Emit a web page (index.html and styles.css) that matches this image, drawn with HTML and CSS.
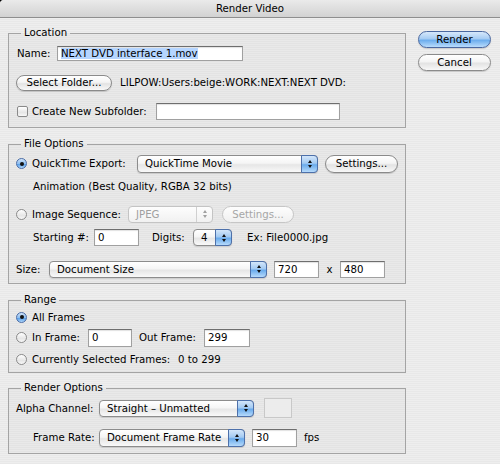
FILE: index.html
```html
<!DOCTYPE html>
<html lang="en">
<head>
    <meta charset="UTF-8">
    <meta name="viewport" content="width=device-width, initial-scale=1.0">
    <title>Render Video</title>
    <link rel="stylesheet" href="styles.css">
</head>
<body>
    <div class="window">
        <div class="titlebar">Render Video</div>
        <div class="dialog">
            <div class="main">
                <fieldset class="group group-location">
                    <legend>Location</legend>
                    <div class="row loc-row">
                        <span class="label label-name">Name:</span>
                        <div class="field field-name"><span class="selected">NEXT DVD interface 1.mov</span></div>
                    </div>
                    <div class="row loc-row">
                        <button class="btn btn-folder">Select Folder...</button>
                        <span class="path">LILPOW:Users:beige:WORK:NEXT:NEXT DVD:</span>
                    </div>
                    <div class="row loc-row">
                        <span class="checkbox"></span>
                        <span class="label label-subfolder">Create New Subfolder:</span>
                        <div class="field field-subfolder"></div>
                    </div>
                </fieldset>

                <fieldset class="group group-file">
                    <legend>File Options</legend>
                    <div class="row r-export">
                        <span class="radio on"></span>
                        <span class="label label-export">QuickTime Export:</span>
                        <div class="popup popup-export">
                            <span class="popup-text">QuickTime Movie</span>
                            <span class="popup-arrows"></span>
                        </div>
                        <button class="btn btn-settings">Settings...</button>
                    </div>
                    <div class="row r-note">Animation (Best Quality, RGBA 32 bits)</div>
                    <div class="row r-seq">
                        <span class="radio"></span>
                        <span class="label label-seq">Image Sequence:</span>
                        <div class="popup popup-seq disabled">
                            <span class="popup-text">JPEG</span>
                            <span class="popup-arrows"></span>
                        </div>
                        <button class="btn btn-settings btn-disabled">Settings...</button>
                    </div>
                    <div class="row r-start">
                        <span class="label label-start">Starting #:</span>
                        <div class="field field-small">0</div>
                        <span class="label label-digits">Digits:</span>
                        <div class="popup popup-digits">
                            <span class="popup-text">4</span>
                            <span class="popup-arrows"></span>
                        </div>
                        <span class="example">Ex: File0000.jpg</span>
                    </div>
                    <div class="row r-size">
                        <span class="label label-size">Size:</span>
                        <div class="popup popup-size">
                            <span class="popup-text">Document Size</span>
                            <span class="popup-arrows"></span>
                        </div>
                        <div class="field field-small field-width">720</div>
                        <span class="times">x</span>
                        <div class="field field-small">480</div>
                    </div>
                </fieldset>

                <fieldset class="group group-range">
                    <legend>Range</legend>
                    <div class="row r-all">
                        <span class="radio on"></span>
                        <span>All Frames</span>
                    </div>
                    <div class="row r-in">
                        <span class="radio"></span>
                        <span class="label label-in">In Frame:</span>
                        <div class="field field-frame">0</div>
                        <span class="label label-out">Out Frame:</span>
                        <div class="field field-frame field-out">299</div>
                    </div>
                    <div class="row r-current">
                        <span class="radio"></span>
                        <span class="label label-current">Currently Selected Frames:</span>
                        <span>0 to 299</span>
                    </div>
                </fieldset>

                <fieldset class="group group-render">
                    <legend>Render Options</legend>
                    <div class="row r-alpha">
                        <span class="label label-alpha">Alpha Channel:</span>
                        <div class="popup popup-alpha">
                            <span class="popup-text">Straight – Unmatted</span>
                            <span class="popup-arrows"></span>
                        </div>
                        <span class="swatch"></span>
                    </div>
                    <div class="row r-rate">
                        <span class="label label-rate">Frame Rate:</span>
                        <div class="popup popup-rate">
                            <span class="popup-text">Document Frame Rate</span>
                            <span class="popup-arrows"></span>
                        </div>
                        <div class="field field-rate">30</div>
                        <span class="fps">fps</span>
                    </div>
                </fieldset>
            </div>

            <div class="side">
                <button class="btn btn-default">Render</button>
                <button class="btn btn-cancel">Cancel</button>
            </div>
        </div>
    </div>
</body>
</html>
```

FILE: styles.css
```css
* {
    box-sizing: border-box;
}

body {
    margin: 0;
    background: #000;
    font-family: "DejaVu Sans", "Lucida Grande", sans-serif;
    font-size: 10.2px;
    color: #000;
}

.window {
    width: 500px;
    height: 464px;
    border-top-left-radius: 4px;
    overflow: hidden;
    background: repeating-linear-gradient(to bottom, #eeeeee 0, #eeeeee 1px, #e8e8e8 1px, #e8e8e8 2px);
}

.titlebar {
    height: 18px;
    line-height: 17px;
    text-align: center;
    border-bottom: 1px solid #8e8e8e;
    background: linear-gradient(#eaeaea, #d2d2d2);
}

.dialog {
    display: flex;
    padding-left: 8px;
}

.main {
    width: 398px;
}

.side {
    display: flex;
    flex-direction: column;
    margin-left: 12px;
    padding-top: 13px;
}

/* Group boxes */
.group {
    margin: 10px 0 0;
    padding: 0 7px;
    min-width: 0;
    border: 1px solid #a4a4a4;
    background: rgba(0, 0, 0, 0.02);
}

.group legend {
    margin-left: 5px;
    padding: 0 3px;
    line-height: 12px;
}

.group-location {
    margin-top: 9px;
    padding-bottom: 1px;
}

.group-file {
    padding-bottom: 2px;
}

.group-render {
    margin-top: 9px;
}

.row {
    display: flex;
    align-items: center;
    white-space: nowrap;
}

.label {
    flex: none;
}

/* Location */
.loc-row { height: 29px; }
.label-name { margin-left: 1px; width: 40px; }
.label-subfolder { width: 124px; }
.path { margin-left: 8px; }

/* File options */
.r-export { height: 27px; }
.r-note { height: 18px; padding-left: 17px; }
.r-seq { height: 24px; margin-top: 7px; }
.r-start { height: 23px; padding-left: 17px; }
.r-size { height: 24px; margin-top: 8px; }

.label-export { width: 105px; }
.label-seq { width: 96px; }
.label-start { width: 61px; }
.label-digits { width: 41px; margin-left: 13px; }
.label-size { width: 33px; }
.example { margin-left: 15px; }
.times { width: 21px; text-align: center; }
.field-width { margin-left: 7px; }

/* Range */
.r-all { height: 22px; }
.r-in { height: 19px; }
.r-current { height: 25px; }
.label-in { width: 56px; }
.label-out { width: 65px; margin-left: 7px; }
.label-current { width: 146px; }

/* Render options */
.r-alpha { height: 28px; }
.r-rate { height: 31px; padding-left: 17px; }
.label-alpha { width: 83px; }
.label-rate { width: 66px; }
.fps { margin-left: 7px; }

.swatch {
    width: 28px;
    height: 20px;
    margin-left: 10px;
    border: 1px solid #c8c8c8;
    background: #ececec;
}

/* Text fields */
.field {
    flex: none;
    height: 17px;
    padding-left: 3px;
    line-height: 15px;
    background: #fff;
    border: 1px solid #a0a0a0;
    border-top-color: #6e6e6e;
    box-shadow: inset 0 1px 1px rgba(0, 0, 0, 0.12);
}

.field-name { width: 186px; height: 15px; line-height: 13px; }
.field-subfolder { width: 184px; }
.field-small { width: 45px; }
.field-frame { width: 44px; height: 18px; line-height: 16px; }
.field-out { width: 46px; }
.field-rate { width: 45px; height: 18px; line-height: 16px; margin-left: 7px; }

.selected {
    background: #b5d5ff;
}

/* Buttons */
.btn {
    flex: none;
    height: 17px;
    padding: 0;
    font: inherit;
    color: #000;
    line-height: 15px;
    text-align: center;
    border: 1px solid #8a8a8a;
    border-radius: 9px;
    background: linear-gradient(#ffffff 0%, #f4f4f4 45%, #e3e3e3 55%, #f8f8f8 100%);
    box-shadow: 0 1px 1px rgba(0, 0, 0, 0.15);
}

.btn-folder { width: 96px; height: 16px; line-height: 14px; }
.btn-settings { width: 73px; height: 18px; line-height: 16px; margin-left: 7px; }

.btn-disabled {
    width: 72px;
    height: 17px;
    line-height: 15px;
    margin-left: 9px;
    color: #a6a6a6;
    border-color: #c6c6c6;
    background: linear-gradient(#fdfdfd, #f0f0f0);
    box-shadow: none;
}

.side .btn { width: 73px; }

.btn-default {
    border-color: #4a68a0;
    background: linear-gradient(#d6e8fb 0%, #a6ccf3 45%, #6caded 55%, #b9dcfc 100%);
}

.btn-cancel { margin-top: 6px; }

/* Popup menus */
.popup {
    flex: none;
    display: flex;
    height: 17px;
    border: 1px solid #8c8c8c;
    border-radius: 4px;
    background: linear-gradient(#ffffff 0%, #f5f5f5 45%, #e6e6e6 55%, #f9f9f9 100%);
    box-shadow: 0 1px 1px rgba(0, 0, 0, 0.12);
}

.popup-text {
    flex: 1;
    padding-left: 7px;
    line-height: 15px;
    overflow: hidden;
}

.popup-arrows {
    width: 17px;
    margin: -1px -1px -1px 0;
    display: flex;
    flex-direction: column;
    align-items: center;
    justify-content: center;
    gap: 2px;
    border: 1px solid #4d70aa;
    border-radius: 0 4px 4px 0;
    background: linear-gradient(#d3e6fa 0%, #a3caf2 45%, #6aabec 55%, #b6dafb 100%);
}

.popup-arrows::before,
.popup-arrows::after {
    content: "";
    border-left: 2.5px solid transparent;
    border-right: 2.5px solid transparent;
}

.popup-arrows::before { border-bottom: 3px solid #111; }
.popup-arrows::after { border-top: 3px solid #111; }

.popup-export { width: 181px; height: 18px; }
.popup-export .popup-text { line-height: 16px; }
.popup-seq { width: 85px; }
.popup-digits { width: 39px; }
.popup-size { width: 218px; }
.popup-alpha { width: 155px; }
.popup-rate { width: 146px; height: 18px; }
.popup-rate .popup-text { line-height: 16px; }

.popup.disabled {
    color: #a0a0a0;
    border-color: #c4c4c4;
    background: linear-gradient(#fdfdfd, #f1f1f1);
    box-shadow: none;
}

.popup.disabled .popup-arrows {
    width: 16px;
    margin: 0;
    border: none;
    border-left: 1px solid #d0d0d0;
    background: none;
}

.popup.disabled .popup-arrows::before { border-bottom-color: #a0a0a0; }
.popup.disabled .popup-arrows::after { border-top-color: #a0a0a0; }

/* Radio buttons and check boxes */
.radio,
.checkbox {
    flex: none;
    width: 11px;
    height: 11px;
    border: 1px solid #8a8a8a;
    background: linear-gradient(#ffffff, #e6e6e6 60%, #f7f7f7);
}

.radio {
    display: flex;
    align-items: center;
    justify-content: center;
    margin-right: 5px;
    border-radius: 50%;
}

.radio.on {
    border-color: #4a6ca6;
    background: linear-gradient(#cfe3f9 0%, #8fbff0 50%, #5ea3ea 60%, #add5fa 100%);
}

.radio.on::after {
    content: "";
    width: 4px;
    height: 4px;
    border-radius: 50%;
    background: #111;
}

.checkbox {
    margin: 0 4px 0 1px;
    border-radius: 2px;
}
```
